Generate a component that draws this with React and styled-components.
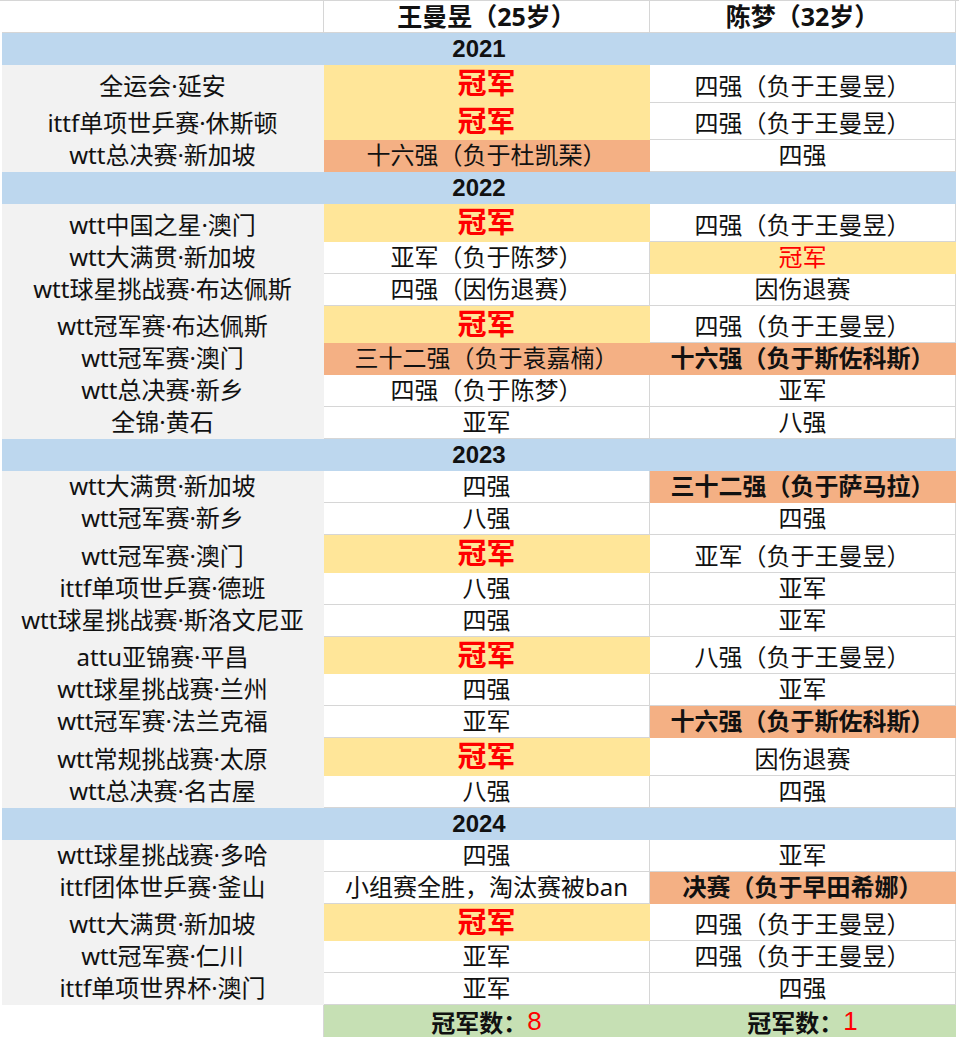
import React from 'react'
import styled, { createGlobalStyle } from 'styled-components'

const GlobalStyle = createGlobalStyle`
  html, body {
    margin: 0;
    padding: 0;
    background: #fff;
  }
  body {
    font-family: "Noto Sans", "Noto Sans CJK SC", sans-serif;
    color: #111;
  }
`

const COLS = '322px 326px 306px'
const GRID = '#d6d6d6'

const fills = {
  none: '#ffffff',
  name: '#f2f2f2',
  gold: '#ffe699',
  peach: '#f4b084',
  green: '#c6e0b4',
  year: '#bdd7ee',
}

const Sheet = styled.div`
  width: 959px;
  padding-left: 2px;
  box-sizing: border-box;
  border-top: 1px solid ${GRID};
`

const Row = styled.div`
  display: grid;
  grid-template-columns: ${COLS};
  height: ${p => p.$h}px;
`

const Cell = styled.div`
  display: flex;
  align-items: flex-end;
  justify-content: center;
  padding-bottom: 1px;
  box-sizing: border-box;
  background: ${p => fills[p.$fill || 'none']};
  border-bottom: 1px solid ${p => (p.$fill && p.$fill !== 'none' ? fills[p.$fill] : GRID)};
  border-right: 1px solid ${p => (p.$fill && p.$fill !== 'none' ? fills[p.$fill] : GRID)};
  font-size: 24px;
  line-height: 1.25;
  white-space: nowrap;
  font-weight: ${p => (p.$bold ? 700 : 400)};
  color: ${p => (p.$red ? '#ff0000' : '#111')};
`

const HeadCell = styled(Cell)`
  font-weight: 700;
  font-size: 25px;
  padding-bottom: 0;
`

const YearBar = styled.div`
  grid-column: 1 / span 3;
  display: flex;
  align-items: flex-end;
  justify-content: center;
  padding-bottom: 1px;
  box-sizing: border-box;
  background: ${fills.year};
  font-size: 24px;
  line-height: 1.25;
  font-weight: 700;
  font-family: "Liberation Sans", "Noto Sans CJK SC", sans-serif;
`

const Champ = styled(Cell)`
  font-size: 29px;
  font-weight: 700;
  color: #ff0000;
  padding-bottom: 0;
`

const Num = styled.span`
  color: #ff0000;
  font-weight: 400;
  font-size: 26px;
  font-family: "Liberation Sans", sans-serif;
`

const C = '冠军'

const data = [
  {
    year: '2021',
    rows: [
      ['全运会·延安', C, ['四强（负于王曼昱）']],
      ['ittf单项世乒赛·休斯顿', C, ['四强（负于王曼昱）']],
      ['wtt总决赛·新加坡', ['十六强（负于杜凯琹）', 'peach'], ['四强']],
    ],
  },
  {
    year: '2022',
    rows: [
      ['wtt中国之星·澳门', C, ['四强（负于王曼昱）']],
      ['wtt大满贯·新加坡', ['亚军（负于陈梦）'], ['冠军', 'gold', 'red']],
      ['wtt球星挑战赛·布达佩斯', ['四强（因伤退赛）'], ['因伤退赛']],
      ['wtt冠军赛·布达佩斯', C, ['四强（负于王曼昱）']],
      ['wtt冠军赛·澳门', ['三十二强（负于袁嘉楠）', 'peach'], ['十六强（负于斯佐科斯）', 'peach', 'bold']],
      ['wtt总决赛·新乡', ['四强（负于陈梦）'], ['亚军']],
      ['全锦·黄石', ['亚军'], ['八强']],
    ],
  },
  {
    year: '2023',
    rows: [
      ['wtt大满贯·新加坡', ['四强'], ['三十二强（负于萨马拉）', 'peach', 'bold']],
      ['wtt冠军赛·新乡', ['八强'], ['四强']],
      ['wtt冠军赛·澳门', C, ['亚军（负于王曼昱）']],
      ['ittf单项世乒赛·德班', ['八强'], ['亚军']],
      ['wtt球星挑战赛·斯洛文尼亚', ['四强'], ['亚军']],
      ['attu亚锦赛·平昌', C, ['八强（负于王曼昱）']],
      ['wtt球星挑战赛·兰州', ['四强'], ['亚军']],
      ['wtt冠军赛·法兰克福', ['亚军'], ['十六强（负于斯佐科斯）', 'peach', 'bold']],
      ['wtt常规挑战赛·太原', C, ['因伤退赛']],
      ['wtt总决赛·名古屋', ['八强'], ['四强']],
    ],
  },
  {
    year: '2024',
    rows: [
      ['wtt球星挑战赛·多哈', ['四强'], ['亚军']],
      ['ittf团体世乒赛·釜山', ['小组赛全胜，淘汰赛被ban'], ['决赛（负于早田希娜）', 'peach', 'bold']],
      ['wtt大满贯·新加坡', C, ['四强（负于王曼昱）']],
      ['wtt冠军赛·仁川', ['亚军'], ['四强（负于王曼昱）']],
      ['ittf单项世界杯·澳门', ['亚军'], ['四强']],
    ],
  },
]

function Result({ value }) {
  if (value === C) return <Champ $fill="gold">冠军</Champ>
  const [text, fill, style] = value
  return (
    <Cell $fill={fill} $bold={style === 'bold'} $red={style === 'red'}>
      {text}
    </Cell>
  )
}

export default function App() {
  return (
    <>
      <GlobalStyle />
      <Sheet>
        <Row $h={32}>
          <HeadCell />
          <HeadCell>王曼昱（25岁）</HeadCell>
          <HeadCell>陈梦（32岁）</HeadCell>
        </Row>
        {data.map(group => (
          <React.Fragment key={group.year}>
            <Row $h={32}>
              <YearBar>{group.year}</YearBar>
            </Row>
            {group.rows.map(([name, a, b], i) => (
              <Row key={i} $h={a === C ? 37.5 : 32}>
                <Cell $fill="name">{name}</Cell>
                <Result value={a} />
                <Result value={b} />
              </Row>
            ))}
          </React.Fragment>
        ))}
        <Row $h={32}>
          <Cell />
          <Cell $fill="green" $bold>
            冠军数：<Num>8</Num>
          </Cell>
          <Cell $fill="green" $bold>
            冠军数：<Num>1</Num>
          </Cell>
        </Row>
      </Sheet>
    </>
  )
}
